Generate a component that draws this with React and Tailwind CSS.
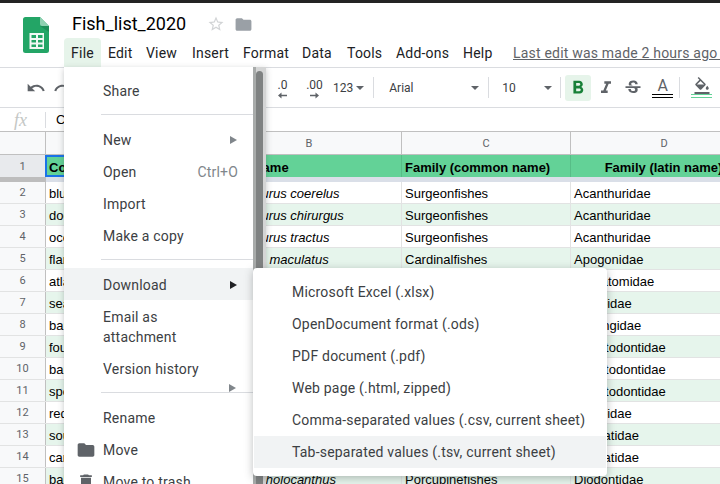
import React from "react";
import { MdUndo, MdRedo, MdStarBorder, MdFolder, MdDelete, MdFormatBold, MdFormatItalic, MdStrikethroughS, MdFormatColorFill } from "react-icons/md";

const rows = [
  ["blue tang", "Acanthurus coerelus", "Surgeonfishes", "Acanthuridae"],
  ["doctorfish", "Acanthurus chirurgus", "Surgeonfishes", "Acanthuridae"],
  ["ocean surgeon", "Acanthurus tractus", "Surgeonfishes", "Acanthuridae"],
  ["flamefish", "Apogon maculatus", "Cardinalfishes", "Apogonidae"],
  ["atlantic bluefish", "Pomatomus saltatrix", "Bluefishes", "Pomatomidae"],
  ["sea mojarra", "Gerres cinereus", "Mojarras", "Gerreidae"],
  ["bar jack", "Caranx ruber", "Jacks", "Carangidae"],
  ["foureye butterflyfish", "Chaetodon capistratus", "Butterflyfishes", "Chaetodontidae"],
  ["banded butterflyfish", "Chaetodon striatus", "Butterflyfishes", "Chaetodontidae"],
  ["spotfin butterflyfish", "Chaetodon ocellatus", "Butterflyfishes", "Chaetodontidae"],
  ["red mojarra", "Eugerres plumieri", "Mojarras", "Gerreidae"],
  ["southern stingray", "Hypanus americanus", "Stingrays", "Dasyatidae"],
  ["caribbean stingray", "Dasyatis guttata", "Stingrays", "Dasyatidae"],
  ["balloonfish", "Diodon holocanthus", "Porcupinefishes", "Diodontidae"],
];

const menuNames = [
  ["File", "w-[37px] justify-center bg-[#e6f4ea] rounded-t-[4px]"],
  ["Edit", "ml-[7px] w-[38px]"],
  ["View", "w-[46px]"],
  ["Insert", "w-[51px]"],
  ["Format", "w-[59px]"],
  ["Data", "w-[45px]"],
  ["Tools", "w-[49px]"],
  ["Add-ons", "w-[67px]"],
  ["Help", "w-[50px]"],
];

function Caret({ className = "" }) {
  return <span className={"block w-0 h-0 border-l-[4px] border-r-[4px] border-t-[4px] border-l-transparent border-r-transparent border-t-[#5f6368] " + className} />;
}

function Sep({ className = "" }) {
  return <span className={"block w-px h-[21px] bg-[#dadce0] " + className} />;
}

function DecArrow({ dir }) {
  return (
    <svg width="9" height="7" viewBox="0 0 9 7" className="block">
      {dir === "left"
        ? <path d="M0 3.5 3.5 0.5V2.7H9V4.3H3.5V6.5Z" fill="#5f6368" />
        : <path d="M9 3.5 5.5 0.5V2.7H0V4.3H5.5V6.5Z" fill="#5f6368" />}
    </svg>
  );
}

function SheetsLogo() {
  return (
    <svg width="26" height="36" viewBox="0 0 26 36" className="block">
      <path d="M2.5 0H17L26 9V33.5A2.5 2.5 0 0 1 23.5 36H2.5A2.5 2.5 0 0 1 0 33.5V2.5A2.5 2.5 0 0 1 2.5 0Z" fill="#23a566" />
      <path d="M17 0L26 9H19A2 2 0 0 1 17 7Z" fill="#8ed1b1" />
      <path d="M17 9L26 15V9Z" fill="#1c8f58" />
      <path d="M6.5 16H21V32H6.5ZM8.5 18V21H13V18ZM15 18V21H19.5V18ZM8.5 23V25.5H13V23ZM15 23V25.5H19.5V23ZM8.5 27.5V30H13V27.5ZM15 27.5V30H19.5V27.5Z" fill="#f1f8f4" fillRule="evenodd" />
    </svg>
  );
}

function MenuItem({ label, right, arrow, icon, hover, className = "" }) {
  return (
    <div className={"relative flex items-center h-8 pl-[39px] pr-[15px] " + (hover ? "bg-[#f1f3f4] " : "") + className}>
      {icon && <span className="absolute left-[12px] top-[6px] text-[#5f6368]">{icon}</span>}
      <span className="flex-1">{label}</span>
      {right && <span className="text-[#80868b]">{right}</span>}
      {arrow && <span className={"block w-0 h-0 border-y-[4px] border-y-transparent border-l-[7px] mr-[1px] " + (arrow === "dark" ? "border-l-[#202124]" : "border-l-[#80868b]")} />}
    </div>
  );
}

function MenuSep({ className = "" }) {
  return <div className={"h-px bg-[#dadce0] ml-[37px] " + className} />;
}

export default function App() {
  return (
    <div className="relative w-[720px] h-[484px] overflow-hidden bg-white text-[#202124] font-['Roboto',sans-serif]">
      {/* window edge */}
      <div className="h-[3px] bg-[#232323]" />

      {/* title + menu bar */}
      <div className="flex h-[65px] border-b border-[#dadce0]">
        <div className="w-[64px] shrink-0 pl-[23px] pt-[14px]"><SheetsLogo /></div>
        <div className="flex-1 min-w-0">
          <div className="flex items-center h-[35px] pl-[8px] pt-[7px]">
            <span className="text-[18px] leading-6 w-[135px] text-black">Fish_list_2020</span>
            <MdStarBorder className="text-[#d2d4d6]" size={18} />
            <MdFolder className="text-[#9aa0a6] ml-[9px]" size={19} />
          </div>
          <div className="flex items-center h-[29px] text-[14px] tracking-[0.2px] whitespace-nowrap">
            {menuNames.map(([n, c]) => (
              <span key={n} className={"flex items-center shrink-0 h-full pt-[1px] " + c}>{n}</span>
            ))}
            <span className="shrink-0 pt-[1px] text-[#5f6368] underline">Last edit was made 2 hours ago by</span>
          </div>
        </div>
      </div>

      {/* toolbar */}
      <div className="flex items-center h-[40px] border-b border-[#dadce0] text-[#5f6368] whitespace-nowrap">
        <MdUndo size={20} className="ml-[26px]" />
        <MdRedo size={20} className="ml-[7px]" />
        <div className="ml-[196px] w-[27px] flex flex-col items-center text-[12px] leading-[13px] text-[#3c4043] mt-[2px]">
          <span>.0</span>
          <DecArrow dir="left" />
        </div>
        <div className="ml-[4px] w-[29px] flex flex-col items-center text-[12px] leading-[13px] text-[#3c4043] mt-[2px]">
          <span>.00</span>
          <DecArrow dir="right" />
        </div>
        <span className="ml-[4px] text-[12px] text-[#3c4043]">123</span>
        <Caret className="ml-[3px]" />
        <Sep className="ml-[9px]" />
        <span className="ml-[15px] w-[82px] text-[12px] text-[#3c4043]">Arial</span>
        <Caret />
        <Sep className="ml-[9px]" />
        <span className="ml-[13px] w-[42px] text-[12px] text-[#3c4043]">10</span>
        <Caret />
        <Sep className="ml-[8px]" />
        <span className="ml-[4px] flex items-center justify-center w-[26px] h-[26px] rounded-[3px] bg-[#e6f4ea]">
          <MdFormatBold size={22} className="text-[#188038]" />
        </span>
        <MdFormatItalic size={20} className="ml-[5px]" />
        <MdStrikethroughS size={20} className="ml-[7px]" />
        <span className="ml-[9px] flex flex-col items-center w-[21px] text-[14px] leading-[15px]">
          <span className="text-[16px] leading-[17px]">A</span>
          <span className="block w-full h-[4px] border-y border-black" />
        </span>
        <Sep className="ml-[6px]" />
        <span className="ml-[11px] flex flex-col items-center w-[21px]">
          <MdFormatColorFill size={18} className="-mb-[1px]" />
          <span className="block w-full h-[4px] border-y border-[#63d297]" />
        </span>
      </div>

      {/* formula bar */}
      <div className="flex items-center h-[24px] border-b border-[#c0c0c0]">
        <span className="w-[45px] pl-[14px] text-[#c4c7c5] italic text-[18px] leading-none font-['Liberation_Serif',serif]">fx</span>
        <span className="block w-px h-[16px] bg-[#dadce0]" />
        <span className="pl-[10px] text-[13px] text-black font-['Liberation_Sans',sans-serif]">Common name</span>
      </div>

      {/* grid */}
      <div className="text-[13px] text-black font-['Liberation_Sans',sans-serif]">
        <div className="flex h-[23px] bg-[#f8f9fa] border-b border-[#c0c0c0] text-[11px] text-[#5f6368] font-['Roboto',sans-serif]">
          <div className="w-[46px] shrink-0 border-r border-[#c0c0c0]" />
          <div className="w-[171px] shrink-0 border-r border-[#c0c0c0] text-center leading-[24px]">A</div>
          <div className="w-[185px] shrink-0 border-r border-[#c0c0c0] text-center leading-[24px]">B</div>
          <div className="w-[169px] shrink-0 border-r border-[#c0c0c0] text-center leading-[24px]">C</div>
          <div className="w-[186px] shrink-0 text-center leading-[24px]">D</div>
        </div>
        <div className="flex h-[22px] bg-[#63d297] font-bold leading-[26px] whitespace-nowrap">
          <div className="w-[46px] shrink-0 bg-[#e8eaed] border-r border-[#c0c0c0] text-[11px] font-normal text-[#5f6368] text-center leading-[24px] font-['Roboto',sans-serif]">1</div>
          <div className="w-[172px] shrink-0 -ml-px pl-[2px] border-[2px] border-[#1a73e8] leading-[22px]">Common name</div>
          <div className="w-[184px] shrink-0 pl-[3px]">Latin name</div>
          <div className="w-[169px] shrink-0 pl-[3px] border-l border-[#57bd87]">Family (common name)</div>
          <div className="w-[186px] shrink-0 text-center border-l border-[#57bd87]">Family (latin name)</div>
        </div>
        <div className="flex h-[5px] bg-[#dadfe8]">
          <div className="w-[46px] bg-[#bdbdbd]" />
        </div>
        {rows.map((r, i) => (
          <div key={i} className={"flex h-[22px] leading-[23px] border-b border-[#e2e3e3] whitespace-nowrap " + (i % 2 ? "bg-[#e6f5ec]" : "bg-white")}>
            <div className="w-[46px] shrink-0 bg-[#f8f9fa] border-r border-[#c0c0c0] text-[11px] leading-[21px] text-[#5f6368] text-center font-['Roboto',sans-serif]">{i + 2}</div>
            <div className="w-[171px] shrink-0 pl-[3px] border-r border-[#e2e3e3]">{r[0]}</div>
            <div className="w-[185px] shrink-0 pl-[4px] italic border-r border-[#e2e3e3]">{r[1]}</div>
            <div className="w-[169px] shrink-0 pl-[3px] border-r border-[#e2e3e3]">{r[2]}</div>
            <div className="w-[186px] shrink-0 pl-[3px]">{r[3]}</div>
          </div>
        ))}
      </div>

      {/* File menu */}
      <div className="absolute left-[64px] top-[67px] w-[202px] h-[430px] flex text-[14px] tracking-[0.2px] text-[#3c4043] shadow-[0_2px_6px_rgba(60,64,67,0.3)]">
        <div className="w-[189px] bg-white pt-[8px]">
          <MenuItem label="Share" />
          <MenuSep className="mt-[7px] mb-[9px]" />
          <MenuItem label="New" arrow="light" />
          <MenuItem label="Open" right="Ctrl+O" />
          <MenuItem label="Import" />
          <MenuItem label="Make a copy" />
          <MenuSep className="mt-[7px] mb-[8px]" />
          <MenuItem label="Download" arrow="dark" hover className="pt-[2px]" />
          <div className="pl-[39px] pr-[15px] pb-[2px] pt-[7px] leading-5">Email as<br />attachment</div>
          <MenuItem label="Version history" className="mt-[4px]" />
          <div className="relative">
            <MenuSep className="mt-[7px] mb-[9px]" />
            <span className="absolute left-[165px] -top-[8px] block w-0 h-0 border-y-[4px] border-y-transparent border-l-[7px] border-l-[#80868b]" />
          </div>
          <MenuItem label="Rename" />
          <MenuItem label="Move" icon={<MdFolder size={20} />} />
          <MenuItem label="Move to trash" icon={<MdDelete size={20} />} />
        </div>
        <div className="flex-1 bg-[#d4d5d5] border-l-[3px] border-[#a8abaa] pt-[4px]">
          <div className="w-[7px] h-full bg-[#7f8282] rounded-t-[4px]" />
        </div>
      </div>

      {/* Download submenu */}
      <div className="absolute left-[253px] top-[268px] w-[354px] bg-white rounded-[4px] py-[8px] text-[14px] tracking-[0.2px] text-[#3c4043] shadow-[0_2px_8px_rgba(60,64,67,0.35)]">
        {[
          "Microsoft Excel (.xlsx)",
          "OpenDocument format (.ods)",
          "PDF document (.pdf)",
          "Web page (.html, zipped)",
          "Comma-separated values (.csv, current sheet)",
          "Tab-separated values (.tsv, current sheet)",
        ].map((t, i) => (
          <div key={t} className={"flex items-center h-8 mx-px pl-[38px] " + (i === 5 ? "bg-[#f1f3f4]" : "")}>{t}</div>
        ))}
      </div>
    </div>
  );
}
